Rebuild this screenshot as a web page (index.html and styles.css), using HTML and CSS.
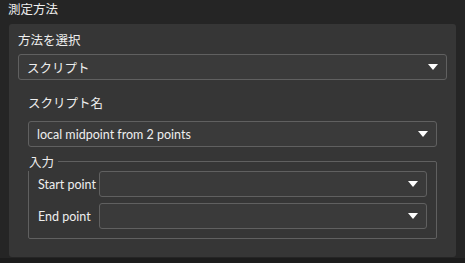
FILE: index.html
```html
<!DOCTYPE html>
<html lang="ja">

<head>
  <meta charset="UTF-8" />
  <meta name="viewport" content="width=device-width, initial-scale=1" />
  <title>測定方法</title>
  <link rel="stylesheet" href="styles.css">
</head>

<body>

  <div class="page">
    <div class="page-title">測定方法</div>

    <div class="panel">
      <div class="label">方法を選択</div>
      <div class="combo">
        <span class="combo-text">スクリプト</span>
        <span class="arrow"></span>
      </div>

      <div class="section">
        <div class="label label-script">スクリプト名</div>
        <div class="combo combo-script">
          <span class="combo-text">local midpoint from 2 points</span>
          <span class="arrow"></span>
        </div>

        <div class="group">
          <div class="group-title">入力</div>
          <div class="form-row">
            <div class="row-label">Start point</div>
            <div class="combo">
              <span class="combo-text"></span>
              <span class="arrow"></span>
            </div>
          </div>
          <div class="form-row">
            <div class="row-label">End point</div>
            <div class="combo">
              <span class="combo-text"></span>
              <span class="arrow"></span>
            </div>
          </div>
        </div>
      </div>
    </div>

    <div class="bottom-bar"></div>
  </div>

</body>

</html>
```

FILE: styles.css
```css
html,
body {
  margin: 0;
  padding: 0;
  background: #252525;
}

body {
  font-family: Lato, "Noto Sans CJK JP", sans-serif;
  font-size: 12.5px;
  color: #eeeeee;
}

.page {
  width: 465px;
  height: 263px;
  overflow: hidden;
}

.page-title {
  height: 24px;
  line-height: 20px;
  padding-left: 8px;
  box-sizing: border-box;
}

.panel {
  margin: 0 9px;
  height: 233px;
  background: #363636;
  border-radius: 3px;
  padding: 9px 9px 0;
  box-sizing: border-box;
}

.label {
  height: 16px;
  line-height: 16px;
  margin-bottom: 5px;
}

.combo {
  height: 26px;
  box-sizing: border-box;
  border: 1px solid #606060;
  border-radius: 3px;
  background: #3a3a3a;
  display: flex;
  align-items: center;
  padding: 0 8px 0 8px;
}

.combo-text {
  flex: 1;
  white-space: nowrap;
}

.arrow {
  width: 0;
  height: 0;
  border-left: 5px solid transparent;
  border-right: 5px solid transparent;
  border-top: 6px solid #ffffff;
}

.section {
  padding: 0 10px;
}

.label-script {
  margin-top: 16px;
  margin-bottom: 9px;
}

.group {
  margin-top: 14px;
  border: 1px solid #606060;
  border-radius: 2px;
  padding: 0 9px 9px 9px;
}

.group-title {
  width: fit-content;
  height: 16px;
  line-height: 16px;
  margin: -7px 0 0 -10px;
  padding: 0 4px 0 1px;
  background: #363636;
}

.form-row {
  display: flex;
  align-items: center;
}

.form-row + .form-row {
  margin-top: 6px;
}

.row-label {
  width: 61px;
}

.form-row .combo {
  flex: 1;
}

.bottom-bar {
  height: 6px;
  margin-top: 1px;
  background: #1c1c1c;
}
```
